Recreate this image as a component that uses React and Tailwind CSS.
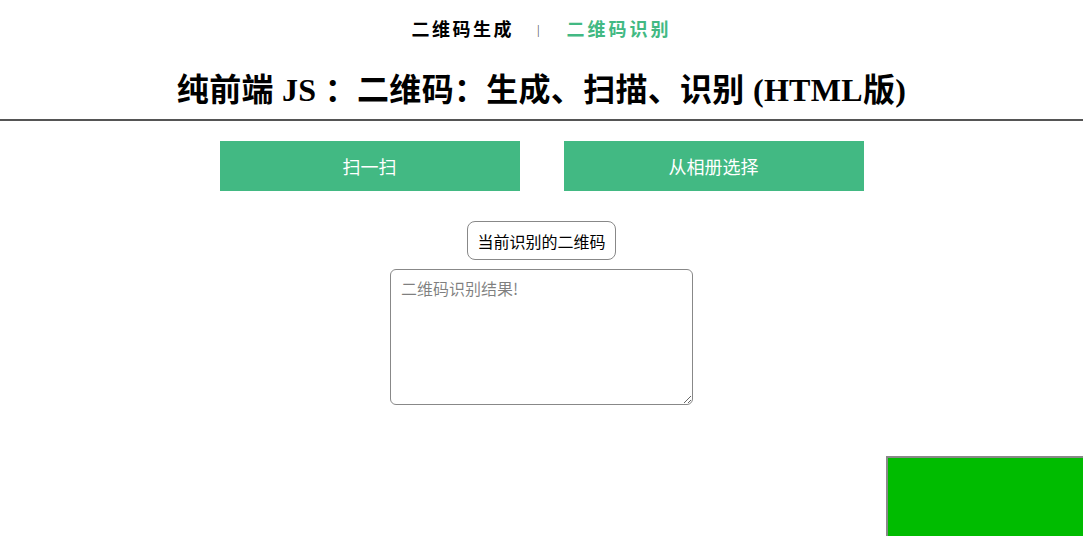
import React from "react";

// 二维码识别页
function Nav() {
    return (
        <div className="h-[60px] flex items-center justify-center font-['Liberation_Serif','Noto_Sans_CJK_SC',serif] text-[18px] font-bold tracking-[2px]">
            <span className="text-black tracking-[2.5px]">二维码生成</span>
            <span className="ml-[23px] mr-[27px] text-[13px] font-normal text-[#555] tracking-normal">|</span>
            <span className="text-[#42b983] tracking-[3px]">二维码识别</span>
        </div>
    );
}

function App() {
    return (
        <div className="min-h-screen bg-white text-black font-['Noto_Sans_CJK_SC',sans-serif]">
            <Nav />
            <h1 className="mt-[10px] h-[40px] leading-[40px] text-center text-[32px] font-bold tracking-[0.3px] font-['Liberation_Serif','Noto_Sans_CJK_SC',serif]">
                纯前端 JS ：二维码：生成、扫描、识别 (HTML版)
            </h1>
            <div className="mt-[9px] border-t-2 border-[#555]"></div>

            <div className="mt-[20px] flex justify-center gap-[44px]">
                <button className="w-[300px] h-[50px] bg-[#42b983] text-white text-[18px]">扫一扫</button>
                <button className="w-[300px] h-[50px] bg-[#42b983] text-white text-[18px]">从相册选择</button>
            </div>

            <div className="mt-[30px] flex flex-col items-center">
                <button className="h-[39px] w-[149px] border border-[#888] rounded-[8px] text-[16px] bg-white">当前识别的二维码</button>
                <textarea
                    className="mt-[9px] w-[303px] h-[136px] border border-[#888] rounded-[6px] px-[10px] py-[6px] text-[16px] outline-none resize"
                    placeholder="二维码识别结果!"
                ></textarea>
            </div>

            {/* 悬浮色块 */}
            <div className="fixed right-0 bottom-0 w-[197px] h-[80px] bg-[#00bc00] border-t-2 border-l-2 border-[#888]"></div>
        </div>
    );
}

export default App;
